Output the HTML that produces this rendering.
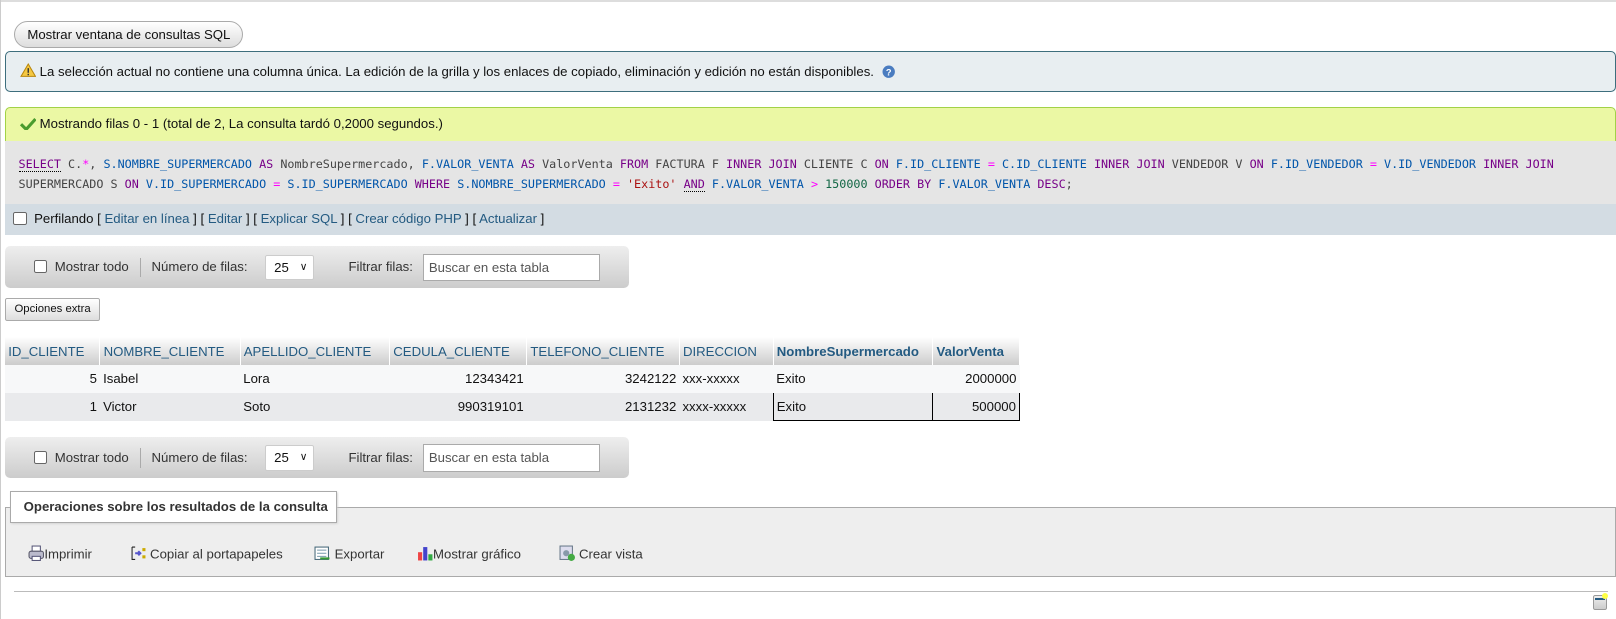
<!DOCTYPE html>
<html><head><meta charset="utf-8"><style>
*{box-sizing:border-box}
body{margin:0;width:1616px;height:618px;font-family:"Liberation Sans",sans-serif;color:#111;background:#fff;position:relative;overflow:hidden}
#w{position:absolute;left:0;top:0;width:1567px;height:600px;zoom:1.031;font-size:12.8px}
.abs{position:absolute}
.topline{left:0;top:0;width:1567px;height:2px;background:#ddd}
.leftline{left:0;top:0;width:1px;height:600px;background:#ccc}
.btn{left:14px;top:20px;width:222px;height:27px;border:1px solid #aaa;border-radius:14px;background:linear-gradient(#fff,#ddd);line-height:25px;text-align:center}
.notice{left:5px;top:49px;width:1562px;height:40px;background:#e8eef1;border:1px solid #3d6e7d;border-radius:5px;line-height:38px;padding-left:13px}
.succ{left:5px;top:104px;width:1562px;height:33px;background:#ebf8a4;border:1px solid #a2d246;border-bottom:none;border-radius:5px 5px 0 0;line-height:32px;padding-left:13px}
.sql{left:5px;top:137px;width:1562px;height:61px;background:#e5e5e5;font-family:"DejaVu Sans Mono","Liberation Mono",monospace;font-size:11.4px;line-height:20px;padding:12px 0 0 13px;color:#444;white-space:nowrap}
.k{color:#770088}.b{color:#05a}.o{color:#f0f}.s{color:#a11}.n{color:#164}
.prof{left:5px;top:198px;width:1562px;height:30px;background:#d3dce3;line-height:30px;padding-left:8px}
a{color:#235a81;text-decoration:none}
.cb{display:inline-block;width:13px;height:13px;border:1px solid #666;border-radius:2px;background:#fff;vertical-align:-2px}
.nav{left:5px;width:605px;height:40px;border-radius:5px;background:linear-gradient(#eee,#ccc)}
.nav .t{position:absolute;top:0;line-height:40px;color:#333}
.sel{position:absolute;top:8px;left:252px;width:48px;height:25px;background:#fff;border:1px solid #ccc;border-radius:2px;line-height:23px;padding-left:8px}
.inp{position:absolute;top:7px;left:405px;width:172px;height:27px;background:#fff;border:1px solid #aaa;line-height:25px;padding-left:5px;color:#555}
.opx{left:5px;top:289px;width:92px;height:22px;border:1px solid #aaa;border-radius:2px;background:linear-gradient(#fff,#ddd);font-size:11px;line-height:20px;text-align:center}
table{position:absolute;left:5px;top:327px;border-collapse:collapse;table-layout:fixed}
th{height:27px;background:linear-gradient(#fff,#ccc);color:#235a81;font-weight:normal;text-align:left;padding:0 3px;border-right:1px solid #fff;white-space:nowrap;overflow:hidden}
th.bd{font-weight:bold}
td{height:27px;padding:0 3px;white-space:nowrap}
tr.r1 td{background:#f7f8f9}tr.r2 td{background:#e9eaec}
.rt{text-align:right}
.fs{left:5px;top:492px;width:1562px;height:68px;border:1px solid #aaa;background:#eee}
.lg{left:10px;top:476px;width:317px;height:31px;border:1px solid #aaa;background:#fff;line-height:30px;padding-left:12px;font-weight:bold;color:#333;box-shadow:1px 1px 2px #ccc}
.act{top:529px;line-height:18px;color:#235a81}
.act span{color:#333}
</style></head><body><div id="w">
<div class="abs topline"></div><div class="abs leftline"></div>
<div class="abs btn">Mostrar ventana de consultas SQL</div>
<div class="abs notice"><svg width="16" height="14" style="vertical-align:-2px"><polygon points="8,1 15,13 1,13" fill="#f5c842" stroke="#b8860b"/><rect x="7.3" y="5" width="1.4" height="4.5" fill="#333"/><rect x="7.3" y="10.5" width="1.4" height="1.4" fill="#333"/></svg> La selección actual no contiene una columna única. La edición de la grilla y los enlaces de copiado, eliminación y edición no están disponibles. <svg width="13" height="13" style="vertical-align:-3px;margin-left:4px"><circle cx="6.5" cy="6.5" r="6" fill="#4a7cc0"/><text x="6.5" y="10" font-size="9" fill="#fff" text-anchor="middle" font-family="Liberation Sans" font-weight="bold">?</text></svg></div>
<div class="abs succ"><svg width="16" height="13" style="vertical-align:-2px"><path d="M1 7 L6 12 L15 2" stroke="#4a9c2e" stroke-width="3" fill="none"/></svg> Mostrando filas 0 - 1 (total de 2, La consulta tardó 0,2000 segundos.)</div>
<div class="abs sql"><span class="k" style="border-bottom:1px dotted #000">SELECT</span> C.<span class="o">*</span>, <span class="b">S.NOMBRE_SUPERMERCADO</span> <span class="k">AS</span> NombreSupermercado, <span class="b">F.VALOR_VENTA</span> <span class="k">AS</span> ValorVenta <span class="k">FROM</span> FACTURA F <span class="k">INNER JOIN</span> CLIENTE C <span class="k">ON</span> <span class="b">F.ID_CLIENTE</span> <span class="o">=</span> <span class="b">C.ID_CLIENTE</span> <span class="k">INNER JOIN</span> VENDEDOR V <span class="k">ON</span> <span class="b">F.ID_VENDEDOR</span> <span class="o">=</span> <span class="b">V.ID_VENDEDOR</span> <span class="k">INNER JOIN</span><br>SUPERMERCADO S <span class="k">ON</span> <span class="b">V.ID_SUPERMERCADO</span> <span class="o">=</span> <span class="b">S.ID_SUPERMERCADO</span> <span class="k">WHERE</span> <span class="b">S.NOMBRE_SUPERMERCADO</span> <span class="o">=</span> <span class="s">'Exito'</span> <span class="k" style="border-bottom:1px dotted #000">AND</span> <span class="b">F.VALOR_VENTA</span> <span class="o">&gt;</span> <span class="n">150000</span> <span class="k">ORDER BY</span> <span class="b">F.VALOR_VENTA</span> <span class="k">DESC</span>;</div>
<div class="abs prof"><span class="cb"></span> &nbsp;Perfilando [ <a>Editar en línea</a> ] [ <a>Editar</a> ] [ <a>Explicar SQL</a> ] [ <a>Crear código PHP</a> ] [ <a>Actualizar</a> ]</div>
<div class="abs nav" style="top:239px"><span class="t" style="left:28px"><span class="cb"></span>&nbsp; Mostrar todo</span><span class="abs" style="left:131px;top:11px;width:1px;height:19px;background:#aaa"></span><span class="t" style="left:142px">Número de filas:</span><div class="sel">25 <span style="position:absolute;right:6px;font-size:10px">&#x2228;</span></div><span class="t" style="left:333px">Filtrar filas:</span><div class="inp">Buscar en esta tabla</div></div>
<div class="abs opx">Opciones extra</div>
<table>
<colgroup><col style="width:92px"><col style="width:136px"><col style="width:145px"><col style="width:133px"><col style="width:148px"><col style="width:91px"><col style="width:155px"><col style="width:84px"></colgroup>
<tr><th>ID_CLIENTE</th><th>NOMBRE_CLIENTE</th><th>APELLIDO_CLIENTE</th><th>CEDULA_CLIENTE</th><th>TELEFONO_CLIENTE</th><th>DIRECCION</th><th class="bd">NombreSupermercado</th><th class="bd">ValorVenta</th></tr>
<tr class="r1"><td class="rt">5</td><td>Isabel</td><td>Lora</td><td class="rt">12343421</td><td class="rt">3242122</td><td>xxx-xxxxx</td><td>Exito</td><td class="rt">2000000</td></tr>
<tr class="r2"><td class="rt">1</td><td>Victor</td><td>Soto</td><td class="rt">990319101</td><td class="rt">2131232</td><td>xxxx-xxxxx</td><td style="border:1px solid #000;border-top:none">Exito</td><td class="rt" style="border:1px solid #000;border-left:none;border-top:none">500000</td></tr>
</table>
<div class="abs nav" style="top:424px"><span class="t" style="left:28px"><span class="cb"></span>&nbsp; Mostrar todo</span><span class="abs" style="left:131px;top:11px;width:1px;height:19px;background:#aaa"></span><span class="t" style="left:142px">Número de filas:</span><div class="sel">25 <span style="position:absolute;right:6px;font-size:10px">&#x2228;</span></div><span class="t" style="left:333px">Filtrar filas:</span><div class="inp">Buscar en esta tabla</div></div>
<div class="abs fs"></div>
<div class="abs lg">Operaciones sobre los resultados de la consulta</div>
<div class="abs act" style="left:27px"><svg width="16" height="16" style="vertical-align:-3px"><rect x="4" y="1" width="8" height="6" fill="#fff" stroke="#557"/><rect x="1" y="6" width="14" height="7" rx="2" fill="#bbc" stroke="#556"/><rect x="4" y="11" width="8" height="4" fill="#fff" stroke="#557"/></svg><span>Imprimir</span></div>
<div class="abs act" style="left:126px"><svg width="16" height="16" style="vertical-align:-3px"><path d="M2 2h3M2 2v12h3" stroke="#222" fill="none"/><path d="M5 8h5M8 6l2 2-2 2" stroke="#55c" stroke-width="2" fill="none"/><rect x="12" y="3" width="3" height="3" fill="#ca0"/><rect x="12" y="10" width="3" height="3" fill="#ca0"/></svg> <span>Copiar al portapapeles</span></div>
<div class="abs act" style="left:305px"><svg width="16" height="16" style="vertical-align:-3px"><rect x="1" y="2" width="13" height="12" fill="#fff" stroke="#467"/><path d="M3 5h9M3 8h9M3 11h9" stroke="#79a"/><path d="M6 13h9" stroke="#393" stroke-width="2"/></svg> <span>Exportar</span></div>
<div class="abs act" style="left:404px"><svg width="16" height="16" style="vertical-align:-3px"><rect x="1" y="7" width="4" height="8" fill="#e44"/><rect x="6" y="2" width="4" height="13" fill="#44c"/><rect x="11" y="9" width="4" height="6" fill="#3a4"/></svg><span>Mostrar gráfico</span></div>
<div class="abs act" style="left:542px"><svg width="16" height="16" style="vertical-align:-3px"><rect x="1" y="1" width="12" height="13" fill="#dde" stroke="#678"/><circle cx="7" cy="8" r="3" fill="#89a"/><circle cx="12" cy="12" r="3.5" fill="#4a4"/></svg> <span>Crear vista</span></div>
<div class="abs" style="left:14px;top:573px;width:1546px;height:1px;background:#bbb"></div>
<div class="abs" style="left:1545px;top:577px;width:14px;height:15px;border:1px solid #999;border-radius:2px;background:linear-gradient(#eee,#ccc)"><div style="margin:2px 1px;height:2px;background:#235a81"></div></div>
<div class="abs" style="left:1554px;top:575px;width:6px;height:6px;border-radius:3px;background:#ff4"></div>
</div></body></html>
